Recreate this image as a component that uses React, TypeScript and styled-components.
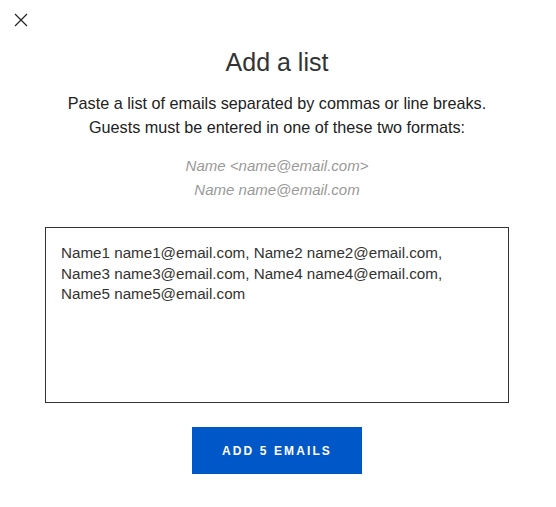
import React from "react";
import styled, { createGlobalStyle } from "styled-components";

const Global = createGlobalStyle`
  html, body { margin: 0; padding: 0; background: #fff; }
  body { font-family: "Liberation Sans", Arial, sans-serif; color: #222; }
`;

const Modal = styled.div`
  position: relative;
  width: 556px;
  height: 507px;
  box-sizing: border-box;
  padding: 46px 47px 0 45px;
  display: flex;
  flex-direction: column;
  align-items: center;
`;

const Close = styled.button`
  position: absolute;
  left: 12px;
  top: 11px;
  width: 18px;
  height: 18px;
  padding: 0;
  border: 0;
  background: none;
  cursor: pointer;
  display: flex;
  align-items: center;
  justify-content: center;
`;

const Header = styled.div`
  align-self: stretch;
  display: flex;
  flex-direction: column;
  align-items: center;
`;

const Title = styled.h1`
  margin: 0;
  font-size: 25px;
  font-weight: 400;
  color: #333;
  line-height: 32px;
`;

const Description = styled.p`
  margin: 13px 0 0;
  font-size: 16.2px;
  line-height: 24px;
  text-align: center;
  color: #222;
  white-space: nowrap;
`;

const Formats = styled.p`
  margin: 15px 0 0;
  font-size: 15px;
  line-height: 24px;
  font-style: italic;
  text-align: center;
  color: #999;
`;

const ListBox = styled.div`
  margin-top: 25px;
  width: 100%;
  height: 176px;
  box-sizing: border-box;
  border: 1px solid #333;
  padding: 15px 15px;
  font-size: 15.2px;
  line-height: 20.5px;
  color: #333;
`;

const Submit = styled.button`
  margin-top: 24px;
  width: 170px;
  height: 47px;
  border: 0;
  background: #0058c8;
  color: #fff;
  font-family: "Liberation Sans", Arial, sans-serif;
  font-size: 12px;
  font-weight: 700;
  letter-spacing: 2.1px;
  cursor: pointer;
`;

export default function App() {
  return (
    <>
      <Global />
      <Modal>
        <Close aria-label="Close">
          <svg width="14" height="14" viewBox="0 0 14 14">
            <path d="M1 1 L13 13 M13 1 L1 13" stroke="#222" strokeWidth="1.2" fill="none" />
          </svg>
        </Close>
        <Header>
          <Title>Add a list</Title>
          <Description>
            Paste a list of emails separated by commas or line breaks.
            <br />
            Guests must be entered in one of these two formats:
          </Description>
          <Formats>
            Name &lt;name@email.com&gt;
            <br />
            Name name@email.com
          </Formats>
        </Header>
        <ListBox>
          Name1 name1@email.com, Name2 name2@email.com,
          <br />
          Name3 name3@email.com, Name4 name4@email.com,
          <br />
          Name5 name5@email.com
        </ListBox>
        <Submit>ADD 5 EMAILS</Submit>
      </Modal>
    </>
  );
}
